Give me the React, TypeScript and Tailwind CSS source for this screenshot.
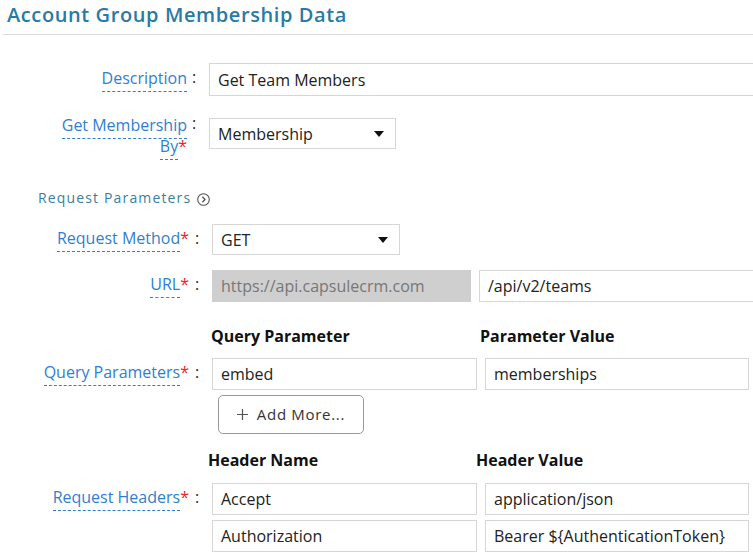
import React from "react";

const LABEL = "text-[#2f7fcf]";

function Label({ text, required }: { text: string; required?: boolean }) {
  return (
    <span className={`${LABEL}`}>
      <span className="border-b border-dashed border-[#2f7fcf] pb-[2px]">{text}</span>
      {required && <span className="text-[#e8262a]">*</span>}
    </span>
  );
}

function Box({
  children,
  w,
  gray,
}: {
  children: React.ReactNode;
  w: string;
  gray?: boolean;
}) {
  return (
    <div
      className={`${w} shrink-0 h-full flex items-center pl-2 border whitespace-nowrap overflow-hidden ${
        gray ? "bg-[#cfcfcf] border-[#cfcfcf] text-[#777]" : "bg-white border-[#d6d6d6] text-[#222]"
      }`}
    >
      {children}
    </div>
  );
}

function Select({ value, w }: { value: string; w: string }) {
  return (
    <div className={`${w} shrink-0 h-full flex items-center justify-between pl-2 pr-[11px] border border-[#d6d6d6] bg-white text-[#222]`}>
      <span>{value}</span>
      <svg width="10" height="6" viewBox="0 0 10 6">
        <path d="M0 0h10L5 6z" fill="#111" />
      </svg>
    </div>
  );
}

function Colon({ w, pl, pt }: { w: string; pl: string; pt: string }) {
  return <div className={`${w} ${pl} ${pt} shrink-0 text-[#222] leading-[20px]`}>:</div>;
}

export default function App() {
  return (
    <div className="w-[753px] h-[554px] overflow-hidden bg-white font-['Open_Sans',sans-serif] text-[16px]">
      <div className="ml-[3px] h-[35px] border-b border-[#dcdcdc] pl-[4px] pt-[1px]">
        <h1 className="text-[20px] font-semibold text-[#2a7aa6] leading-[28px] tracking-[0.6px] whitespace-nowrap">
          Account Group Membership Data
        </h1>
      </div>

      {/* Description */}
      <div className="flex mt-[28px] h-[33px]">
        <div className="w-[187px] shrink-0 text-right pt-[5px] leading-[20px]">
          <Label text="Description" />
        </div>
        <Colon w="w-[22px]" pl="pl-[5px]" pt="pt-[4px]" />
        <Box w="w-[560px]">Get Team Members</Box>
      </div>

      {/* Get Membership By */}
      <div className="flex mt-[22px] h-[31px]">
        <div className="w-[187px] shrink-0 text-right -mt-[3px] leading-[21px]">
          <div className="inline-block max-w-[140px]">
            <Label text="Get Membership By" required />
          </div>
        </div>
        <Colon w="w-[22px]" pl="pl-[5px]" pt="-mt-[5px]" />
        <Select value="Membership" w="w-[187px]" />
      </div>

      {/* Request Parameters */}
      <div className="flex items-center gap-[6px] ml-[38px] mt-[39px] text-[14px] tracking-[1.15px] text-[#3a7fa0] leading-[20px]">
        <span>Request Parameters</span>
        <svg width="13" height="13" viewBox="0 0 13 13" className="mt-[2px]">
          <circle cx="6.5" cy="6.5" r="5.8" fill="none" stroke="#555" strokeWidth="1.1" />
          <path d="M5.3 3.8l2.7 2.7-2.7 2.7" fill="none" stroke="#555" strokeWidth="1.3" />
        </svg>
      </div>

      {/* Request Method */}
      <div className="flex mt-[16px] h-[31px]">
        <div className="w-[189px] shrink-0 text-right pt-[4px] leading-[20px]">
          <Label text="Request Method" required />
        </div>
        <Colon w="w-[23px]" pl="pl-[6px]" pt="pt-[4px]" />
        <Select value="GET" w="w-[188px]" />
      </div>

      {/* URL */}
      <div className="flex mt-[15px] h-[32px]">
        <div className="w-[189px] shrink-0 text-right pt-[4px] leading-[20px]">
          <Label text="URL" required />
        </div>
        <Colon w="w-[23px]" pl="pl-[6px]" pt="pt-[4px]" />
        <Box w="w-[259px]" gray>
          https://api.capsulecrm.com
        </Box>
        <div className="ml-[8px] h-full shrink-0">
          <Box w="w-[290px]">/api/v2/teams</Box>
        </div>
      </div>

      {/* Query Parameters */}
      <div className="flex mt-[23px] font-bold text-[#111] leading-[22px]">
        <div className="w-[211px] shrink-0" />
        <div className="w-[269px] shrink-0">Query Parameter</div>
        <div>Parameter Value</div>
      </div>
      <div className="flex mt-[11px] h-[32px]">
        <div className="w-[189px] shrink-0 text-right pt-[4px] leading-[20px]">
          <Label text="Query Parameters" required />
        </div>
        <Colon w="w-[23px]" pl="pl-[6px]" pt="pt-[4px]" />
        <Box w="w-[265px]">embed</Box>
        <div className="ml-[8px] h-full shrink-0">
          <Box w="w-[264px]">memberships</Box>
        </div>
      </div>
      <div className="ml-[218px] mt-[5px] w-[146px] h-[39px] border border-[#999] rounded-[5px] flex items-center justify-center gap-[9px] text-[15px] tracking-[0.7px] text-[#333]">
        <svg width="11" height="11" viewBox="0 0 11 11">
          <path d="M5.5 0v11M0 5.5h11" stroke="#555" strokeWidth="1.2" />
        </svg>
        <span>Add More...</span>
      </div>

      {/* Request Headers */}
      <div className="flex mt-[15px] font-bold text-[#111] leading-[22px]">
        <div className="w-[208px] shrink-0" />
        <div className="w-[268px] shrink-0">Header Name</div>
        <div>Header Value</div>
      </div>
      <div className="flex mt-[12px] h-[32px]">
        <div className="w-[189px] shrink-0 text-right pt-[4px] leading-[20px]">
          <Label text="Request Headers" required />
        </div>
        <Colon w="w-[23px]" pl="pl-[6px]" pt="pt-[4px]" />
        <Box w="w-[265px]">Accept</Box>
        <div className="ml-[8px] h-full shrink-0">
          <Box w="w-[264px]">application/json</Box>
        </div>
      </div>
      <div className="flex mt-[5px] h-[32px]">
        <div className="w-[212px] shrink-0" />
        <Box w="w-[265px]">Authorization</Box>
        <div className="ml-[8px] h-full shrink-0">
          <Box w="w-[264px]">{"Bearer ${AuthenticationToken}"}</Box>
        </div>
      </div>
    </div>
  );
}
